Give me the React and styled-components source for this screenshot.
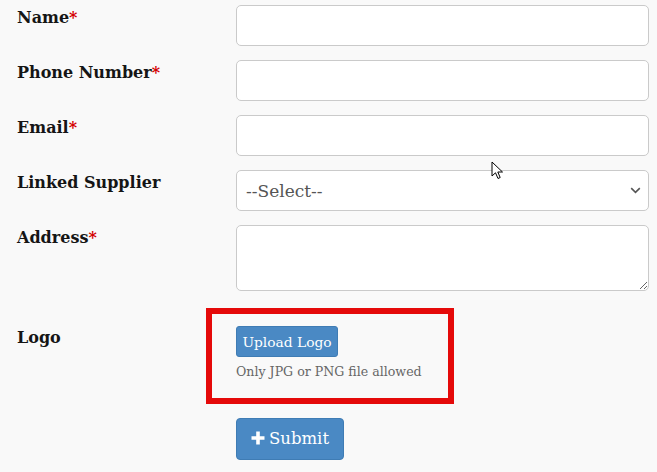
import React from "react";
import styled, { createGlobalStyle } from "styled-components";

const GlobalStyle = createGlobalStyle`
  html, body { margin: 0; padding: 0; }
  body {
    background: #f9f9f9;
    font-family: "DejaVu Serif", "Liberation Serif", serif;
    color: #222;
  }
`;

const Page = styled.div`
  position: relative;
  width: 657px;
  height: 472px;
  overflow: hidden;
  background: #f9f9f9;
`;

const Form = styled.form`
  display: grid;
  grid-template-columns: 219px 413px;
  row-gap: 14px;
  padding: 5px 0 0 17px;
  align-items: start;
`;

const Label = styled.label`
  font-weight: 700;
  font-size: 16px;
  line-height: 22px;
  color: #151515;
  padding-top: ${(p) => p.$offset ?? 2}px;
`;

const Req = styled.span`
  color: #d40000;
`;

const TextInput = styled.input`
  box-sizing: border-box;
  width: 413px;
  height: 41px;
  border: 1px solid #cacaca;
  border-radius: 5px;
  background: #fff;
  margin: 0;
  outline: none;
`;

const SelectWrap = styled.div`
  position: relative;
  width: 413px;
  height: 41px;
`;

const Select = styled.select`
  box-sizing: border-box;
  width: 100%;
  height: 41px;
  border: 1px solid #cacaca;
  border-radius: 5px;
  background: #fff;
  appearance: none;
  -webkit-appearance: none;
  padding: 0 0 0 9px;
  font-family: "DejaVu Serif", serif;
  font-size: 17px;
  color: #555;
  margin: 0;
  outline: none;
`;

const Chevron = styled.svg`
  position: absolute;
  right: 8px;
  top: 17px;
  pointer-events: none;
`;

const TextArea = styled.textarea`
  box-sizing: border-box;
  width: 413px;
  height: 66px;
  border: 1px solid #cacaca;
  border-radius: 5px;
  background: #fff;
  margin: 0;
  resize: vertical;
  outline: none;
  display: block;
`;

const Highlight = styled.div`
  box-sizing: border-box;
  width: 248px;
  height: 96px;
  margin: 3px 0 0 -30px;
  border: 6px solid #e50a0a;
  padding: 12px 0 0 24px;
`;

const UploadButton = styled.button`
  box-sizing: border-box;
  width: 102px;
  height: 31px;
  border: 1px solid #3f7cb4;
  border-radius: 3px;
  background: #4a89c4;
  color: #fff;
  font-family: "DejaVu Serif", serif;
  font-size: 13.8px;
  padding: 0;
  cursor: pointer;
`;

const Hint = styled.div`
  margin-top: 7px;
  font-size: 12.6px;
  line-height: 16px;
  color: #666;
`;

const SubmitButton = styled.button`
  grid-column: 2;
  box-sizing: border-box;
  width: 108px;
  height: 42px;
  border: 1px solid #3f7cb4;
  border-radius: 4px;
  background: #4a89c4;
  color: #fff;
  font-family: "DejaVu Serif", serif;
  font-size: 16.5px;
  display: flex;
  align-items: center;
  justify-content: center;
  gap: 4px;
  padding: 0 0 2px 0;
  cursor: pointer;
`;

const Cursor = styled.svg`
  position: absolute;
  left: 491px;
  top: 161px;
  pointer-events: none;
`;

export default function App() {
  return (
    <Page>
      <GlobalStyle />
      <Form onSubmit={(e) => e.preventDefault()}>
        <Label>Name<Req>*</Req></Label>
        <TextInput type="text" />

        <Label>Phone Number<Req>*</Req></Label>
        <TextInput type="text" />

        <Label>Email<Req>*</Req></Label>
        <TextInput type="text" />

        <Label>Linked Supplier</Label>
        <SelectWrap>
          <Select defaultValue="">
            <option value="">--Select--</option>
          </Select>
          <Chevron width="11" height="7" viewBox="0 0 11 7">
            <path d="M1.2 1.2 L5.5 5.3 L9.8 1.2" fill="none" stroke="#555" strokeWidth="1.6" />
          </Chevron>
        </SelectWrap>

        <Label>Address<Req>*</Req></Label>
        <TextArea />

        <Label $offset={22}>Logo</Label>
        <Highlight>
          <UploadButton type="button">Upload Logo</UploadButton>
          <Hint>Only JPG or PNG file allowed</Hint>
        </Highlight>

        <SubmitButton type="submit">
          <svg width="14" height="14" viewBox="0 0 14 14">
            <path d="M5.2 0.5h3.6v4.7h4.7v3.6H8.8v4.7H5.2V8.8H0.5V5.2h4.7z" fill="#fff" />
          </svg>
          Submit
        </SubmitButton>
      </Form>
      <Cursor width="13" height="20" viewBox="0 0 13 20">
        <path
          d="M1 1 L1 15 L4.5 11.8 L7 17.5 L9.2 16.5 L6.8 11 L11.5 11 Z"
          fill="#fff"
          stroke="#000"
          strokeWidth="1"
          strokeLinejoin="round"
        />
      </Cursor>
    </Page>
  );
}
